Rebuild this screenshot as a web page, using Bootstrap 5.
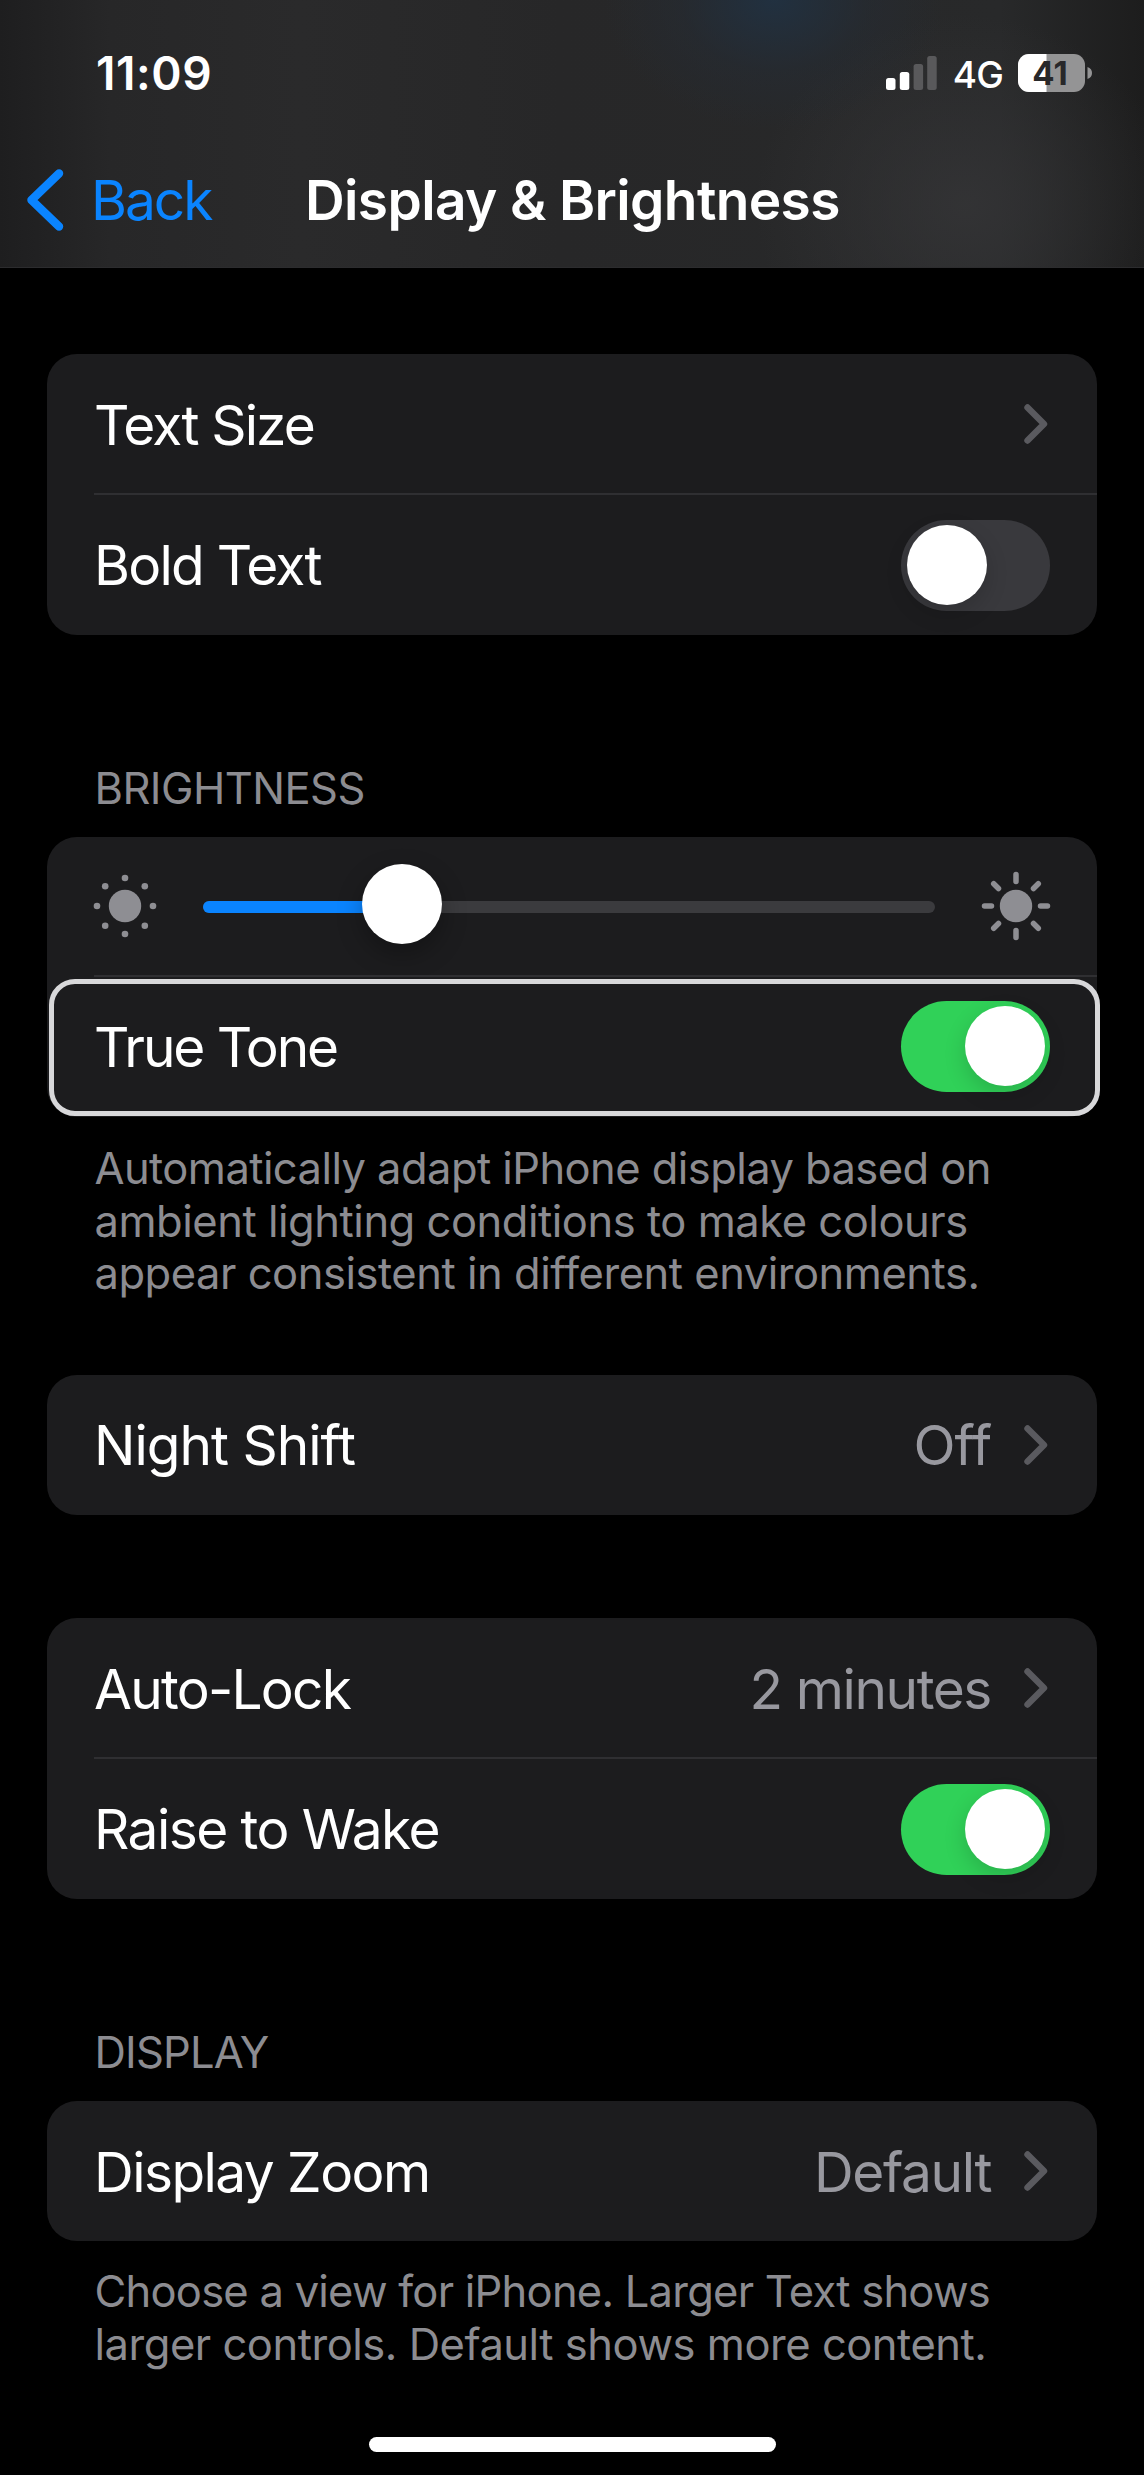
<!DOCTYPE html>
<html lang="en-GB" data-bs-theme="dark">
<head>
<meta charset="utf-8">
<meta name="viewport" content="width=device-width, initial-scale=1">
<title>Display &amp; Brightness</title>
<link href="https://cdn.jsdelivr.net/npm/bootstrap@5.3.0/dist/css/bootstrap.min.css" rel="stylesheet">
<style>
  body { background: #000; color: #fff; font-family: Inter, "Liberation Sans", sans-serif; font-size: 55px; line-height: 66px; overflow: hidden; }
  .screen { width: 1144px; height: 2475px; overflow: hidden; }
  .topbar { height: 268px; border-bottom: 1px solid #2c2c2e; background:
      radial-gradient(ellipse 170px 130px at 774px 0, rgba(32,50,68,.85), rgba(36,44,54,.45) 55%, transparent),
      radial-gradient(ellipse 210px 190px at 965px 205px, rgba(54,54,56,.75), transparent),
      linear-gradient(90deg, #1e1e1f 0, #272728 110px, #2a2a2b 300px, #272728 560px, #28292a 1000px, #1d1d1d 1144px); }
  .status { height: 146px; padding: 0 51px 0 96px; }
  .clock { font-size: 46px; font-weight: 600; letter-spacing: .6px; }
  .network { font-size: 37px; font-weight: 500; margin: 3px 15px 0 16px; letter-spacing: -.8px; }
  .navrow { height: 110px; padding-bottom: 2px; }
  .back { color: #0a84ff; padding-left: 26px; width: 305px; letter-spacing: -2px; }
  .back span { margin-left: 26px; }
  .page-title { font-size: 55px; font-weight: 600; line-height: 66px; letter-spacing: -.63px; }
  .page-body { padding: 86px 47px 0; }
  .panel { background: #1c1c1e; border: 0; border-radius: 30px; --bs-card-border-radius: 30px; }
  .setting { height: 140.5px; padding: 1px 47px 0 47px; }
  .setting.slider-row { height: 139px; padding: 0 44px 2px; }
  .rule { height: 2px; margin: -1.3px 0 -.7px 47px; background: #2f2f32; }
  .chev { width: 24px; height: 40px; margin-right: 2px; margin-top: -1px; }
  .setting .value { color: #98989f; margin-right: 33px; }
  .caption { color: #8c8c91; font-size: 43.5px; line-height: 52.7px; padding-left: 47.5px; }
  .head-gap { height: 202px; padding-bottom: 22.5px; }
  .toggle { width: 149px; height: 91px; border-radius: 46px; background: #39393d; padding: 5px 6px; }
  .toggle.on { background: #30d158; padding-right: 5px; }
  .knob { width: 80px; height: 80px; border-radius: 50%; background: #fff; box-shadow: 0 8px 22px rgba(0,0,0,.16); }
  .slider { width: 732px; height: 12px; border-radius: 6px; background: #3b3b3e; margin-top: 3px; }
  .slider-fill { height: 12px; border-radius: 6px; background: #0a84ff; }
  .slider .knob { margin-left: -39px; margin-top: -6px; box-shadow: 0 10px 26px rgba(0,0,0,.3); }
  .focused { top: 142px; left: 2px; width: 1051px; height: 137px; border: 5px solid #d8d8da; border-radius: 26px; }
  .note { padding-top: 25.5px; white-space: nowrap; }
  .note.last { padding-top: 24px; }
  .home-bar { width: 407px; height: 15px; border-radius: 8px; background: #fff; margin-bottom: 23px; }
  .gap-a { margin-top: 74.5px; } .gap-b { margin-top: 102.8px; }
  #t-size { letter-spacing: -1.87px; } #t-bold { letter-spacing: -1.75px; } #t-tone { letter-spacing: -2.1px; }
  #t-night { letter-spacing: -1px; } #t-lock { letter-spacing: -1.75px; } #t-raise, #t-zoom { letter-spacing: -1.55px; }
  #v-off { letter-spacing: -1px; } #v-min, #v-def { letter-spacing: -1.4px; }
  #t-bright { letter-spacing: -.55px; } #t-display { letter-spacing: -.8px; }
  #n1 { letter-spacing: -.57px; } #n2, #n3, #n5 { letter-spacing: -.47px; } #n4 { letter-spacing: -.75px; }
</style>
<script src="https://cdn.jsdelivr.net/npm/bootstrap@5.3.0/dist/js/bootstrap.bundle.min.js"></script>
</head>
<body>
<svg class="d-none" xmlns="http://www.w3.org/2000/svg">
  <symbol id="chevron" viewBox="0 0 24 40"><path d="M3.500 3.500 20 20 3.500 36.500" fill="none" stroke="#5a5a5f" stroke-width="6.400" stroke-linecap="round" stroke-linejoin="round"/></symbol>
</svg>
<div class="screen d-flex flex-column">
  <header class="topbar flex-shrink-0">
    <div class="status d-flex align-items-center justify-content-between">
      <span class="clock">11:09</span>
      <div class="d-flex align-items-center">
        <svg width="51" height="34" viewBox="0 0 51 34" aria-label="Signal">
          <g fill="#fff"><rect y="22" width="9.500" height="12" rx="2.500"/><rect x="13.800" y="16" width="9.500" height="18" rx="2.500"/></g>
          <g fill="#59595b"><rect x="27.600" y="8" width="9.500" height="26" rx="2.500"/><rect x="41.200" width="9.500" height="34" rx="2.500"/></g>
        </svg>
        <span class="network">4G</span>
        <svg width="75" height="38" viewBox="0 0 75 38" aria-label="Battery">
          <defs><clipPath id="cell"><rect width="67" height="38" rx="11"/></clipPath></defs>
          <g clip-path="url(#cell)"><rect width="67" height="38" fill="#949495"/><rect width="28.500" height="38" fill="#fff"/></g>
          <path d="M69.500 13Q74 14.500 74 19T69.500 25Z" fill="#949495"/>
          <text x="32" y="31" text-anchor="middle" font-family="Inter" font-size="33" font-weight="700" fill="#28282a">41</text>
        </svg>
      </div>
    </div>
    <nav class="navrow d-flex align-items-center">
      <a class="back d-flex align-items-center text-decoration-none" href="#">
        <svg width="39" height="62" viewBox="0 0 39 62"><path d="M33 4.500 5.500 31 33 57.500" fill="none" stroke="#0a84ff" stroke-width="8.500" stroke-linecap="round" stroke-linejoin="round"/></svg>
        <span>Back</span>
      </a>
      <h1 class="page-title m-0">Display &amp; Brightness</h1>
    </nav>
  </header>

  <main class="page-body">
    <section class="card panel">
      <div class="setting d-flex align-items-center justify-content-between"><span id="t-size">Text Size</span><svg class="chev"><use href="#chevron"/></svg></div>
      <div class="rule"></div>
      <div class="setting d-flex align-items-center justify-content-between"><span id="t-bold">Bold Text</span><span class="toggle d-flex" role="switch" aria-checked="false"><span class="knob"></span></span></div>
    </section>

    <div class="caption head-gap d-flex align-items-end"><span id="t-bright">BRIGHTNESS</span></div>
    <section class="card panel position-relative">
      <div class="setting slider-row d-flex align-items-center justify-content-between">
        <svg width="68" height="72" viewBox="-34 -36 68 72" fill="#8e8e93"><circle r="16.200"/>
          <circle cy="-28" r="3.300"/><circle cy="28" r="3.300"/><circle cx="-28" r="3.300"/><circle cx="28" r="3.300"/>
          <circle cx="-19.800" cy="-19.800" r="3.300"/><circle cx="19.800" cy="-19.800" r="3.300"/><circle cx="-19.800" cy="19.800" r="3.300"/><circle cx="19.800" cy="19.800" r="3.300"/></svg>
        <div class="slider d-flex align-items-center"><div class="slider-fill" style="width:198px"></div><div class="knob flex-shrink-0"></div></div>
        <svg width="74" height="72" viewBox="-37 -36 74 72" fill="#8e8e93"><circle r="16.200"/>
          <path d="M0-31.500V-24.500M0 31.500V24.500M-31.500 0H-24.500M31.500 0H24.500M-22.300-22.300-17.500-17.500M22.300-22.300 17.500-17.500M-22.300 22.300-17.500 17.500M22.300 22.300 17.500 17.500" stroke="#8e8e93" stroke-width="5.500" stroke-linecap="round"/></svg>
      </div>
      <div class="rule"></div>
      <div class="setting d-flex align-items-center justify-content-between"><span id="t-tone">True Tone</span><span class="toggle on d-flex justify-content-end" role="switch" aria-checked="true"><span class="knob"></span></span></div>
      <div class="focused position-absolute"></div>
    </section>
    <div class="caption note"><span id="n1">Automatically adapt iPhone display based on</span><br><span id="n2">ambient lighting conditions to make colours</span><br><span id="n3">appear consistent in different environments.</span></div>

    <section class="card panel gap-a">
      <div class="setting d-flex align-items-center"><span class="me-auto" id="t-night">Night Shift</span><span class="value" id="v-off">Off</span><svg class="chev"><use href="#chevron"/></svg></div>
    </section>

    <section class="card panel gap-b">
      <div class="setting d-flex align-items-center"><span class="me-auto" id="t-lock">Auto-Lock</span><span class="value" id="v-min">2 minutes</span><svg class="chev"><use href="#chevron"/></svg></div>
      <div class="rule"></div>
      <div class="setting d-flex align-items-center justify-content-between"><span id="t-raise">Raise to Wake</span><span class="toggle on d-flex justify-content-end" role="switch" aria-checked="true"><span class="knob"></span></span></div>
    </section>

    <div class="caption head-gap d-flex align-items-end"><span id="t-display">DISPLAY</span></div>
    <section class="card panel">
      <div class="setting d-flex align-items-center"><span class="me-auto" id="t-zoom">Display Zoom</span><span class="value" id="v-def">Default</span><svg class="chev"><use href="#chevron"/></svg></div>
    </section>
    <div class="caption note last"><span id="n4">Choose a view for iPhone. Larger Text shows</span><br><span id="n5">larger controls. Default shows more content.</span></div>
  </main>
  <div class="home-bar mx-auto mt-auto flex-shrink-0"></div>
</div>
</body>
</html>
